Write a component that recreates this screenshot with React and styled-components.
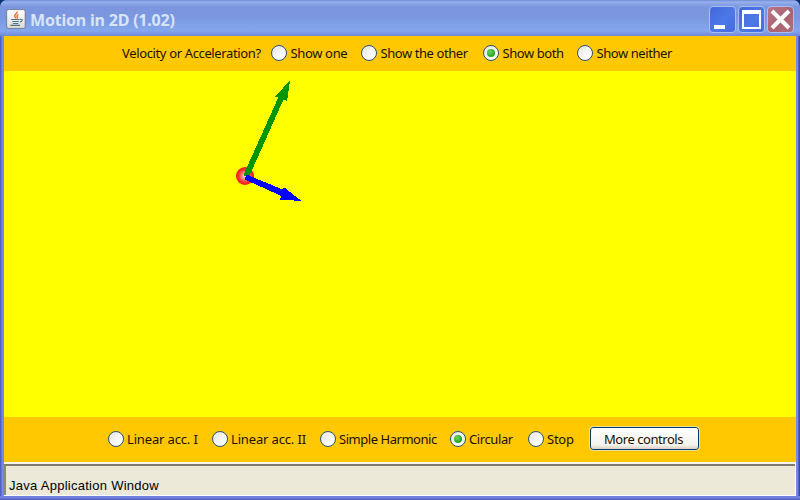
import React from 'react';
import styled, { createGlobalStyle } from 'styled-components';

const GlobalStyle = createGlobalStyle`
  * { box-sizing: border-box; }
  body { margin: 0; background: #08306e; overflow: hidden; }
`;

const Window = styled.main`
  width: 800px;
  height: 500px;
  display: flex;
  flex-direction: column;
  padding: 0 4px 4px;
  border-radius: 7px 7px 0 0;
  overflow: hidden;
  background:
    linear-gradient(to bottom, #6f80e0, #7180dc 50%, #4a50b4) 0 100% / 100% 4px no-repeat,
    linear-gradient(to right, #5260c4 0 1px, #6474da 1px 2px, #7688e2 2px 798px, #5562c8 798px 799px, #3e489e 799px);
`;

const TitleBar = styled.header`
  height: 36px;
  flex: none;
  margin: 0 -4px;
  padding: 6px 6px 0;
  display: flex;
  align-items: flex-start;
  background: linear-gradient(to bottom, #7388d8 0, #96b2ec 2px, #88a4e6 4px, #7c96de 7px, #7b97e0 17px, #80a1e8 26px, #83a6ec 31px, #7b93e0 34px, #7286d6 36px);
`;

const AppIcon = styled.svg`
  width: 20px;
  height: 23px;
  flex: none;
`;

const Title = styled.h1`
  margin: 0 0 0 4px;
  flex: 1;
  font: bold 16px/29px "Noto Sans", sans-serif;
  letter-spacing: -0.2px;
  color: #d8e4f8;
  white-space: nowrap;
`;

const Controls = styled.div`
  display: flex;
  gap: 2px;
`;

const WindowButton = styled.button`
  width: 27px;
  height: 27px;
  padding: 0;
  border: 1px solid #a9bdf3;
  border-radius: 4px;
  background: ${p => p.$close
    ? 'linear-gradient(135deg, #b87787, #ac6370 55%, #b0717e)'
    : 'linear-gradient(135deg, #4468d8, #4d78e8 55%, #456cdd)'};
  svg { display: block; width: 25px; height: 25px; }
`;

const OptionBar = styled.section`
  flex: none;
  height: ${p => p.$height}px;
  padding: 0 0 ${p => p.$lift}px ${p => p.$inset}px;
  display: flex;
  align-items: center;
  background: #ffc800;
`;

const Text = styled.span`
  font: 13px/18px "Noto Sans", sans-serif;
  letter-spacing: ${p => p.$spacing || 0}px;
  color: #1c1000;
  white-space: nowrap;
`;

const Prompt = styled(Text)`
  width: 149px;
`;

const Option = styled.label`
  width: ${p => p.$width}px;
  flex: none;
  display: flex;
  align-items: center;
  gap: ${p => p.$gap || 3}px;
`;

const RadioDot = styled.span`
  width: 16px;
  height: 16px;
  flex: none;
  display: grid;
  place-items: center;
  border: 1px solid #285078;
  border-radius: 50%;
  background: linear-gradient(135deg, #e3e3de, #ffffff 75%);
`;

const RadioMark = styled.span`
  width: 8px;
  height: 8px;
  border-radius: 50%;
  background: radial-gradient(circle at 38% 35%, #6cd466, #2fae2d 55%, #1c941c);
`;

const Stage = styled.svg`
  display: block;
  width: 792px;
  height: 346px;
  flex: none;
  background: #ffff00;
`;

const PushButton = styled.button`
  width: 109px;
  height: 23px;
  margin-left: 1px;
  padding: 0 2px 0 0;
  border: 1px solid #003c74;
  border-radius: 3px;
  outline: 1px solid #f3df92;
  background: linear-gradient(to bottom, #ffffff, #f4f3ee 80%, #d8d2c5);
`;

const StatusBar = styled.footer`
  flex: 1;
  border-top: 2px solid #f6f4e8;
  border-right: 1px solid #fff;
  border-bottom: 1px solid #fff;
  background: #ece9d8;
`;

const StatusText = styled.p`
  margin: 0;
  height: 31px;
  padding: 11px 0 0 3px;
  border: 0 solid #716f64;
  border-width: 2px 0 0 2px;
  border-top-color: #7c7a70;
  border-left-color: #8c897b;
  font: 13px/18px "Liberation Sans", Arial, sans-serif;
  letter-spacing: 0.27px;
  color: #000;
`;

const velocityOptions = [
  { label: 'Show one', width: 90, gap: 3.5, spacing: -0.35 },
  { label: 'Show the other', width: 122, gap: 3.5, spacing: -0.43 },
  { label: 'Show both', width: 94, gap: 3.5, spacing: -0.42, checked: true },
  { label: 'Show neither', width: 100, gap: 3.5, spacing: -0.43 },
];

const motionOptions = [
  { label: 'Linear acc. I', width: 104, spacing: -0.15 },
  { label: 'Linear acc. II', width: 108, spacing: -0.15 },
  { label: 'Simple Harmonic', width: 130, spacing: -0.46 },
  { label: 'Circular', width: 78, spacing: -0.4, checked: true },
  { label: 'Stop', width: 61, spacing: -0.25 },
];

const Options = ({ items }) => items.map(({ label, width, gap, checked, spacing }) => (
  <Option key={label} $width={width} $gap={gap}>
    <RadioDot>{checked && <RadioMark />}</RadioDot>
    <Text $spacing={spacing}>{label}</Text>
  </Option>
));

const JavaIcon = () => (
  <AppIcon viewBox="0 0 20 23">
    <defs>
      <linearGradient id="tile" x2="0" y2="1">
        <stop stopColor="#ffffff" /><stop offset="1" stopColor="#dcdcd8" />
      </linearGradient>
    </defs>
    <rect x=".6" y="3.6" width="18.6" height="18.8" rx="2" fill="url(#tile)" stroke="#666c80" strokeWidth=".8" />
    <path d="M11.2 5.5c.5 2.3-3.7 2.8-2.4 5 .4.7 1 1 1 1.9M12.4 8.7c-2.2.9-1.4 1.7-1 2.6.2.5 0 .9-.4 1.3" fill="none" stroke="#e96d2a" strokeWidth="1.4" />
    <path d="M5.2 13.5h8.4M6.4 15.5h6.4M6.8 17.5h5.5M4.4 19.4h9.7M14 13.4c3.3-.7 2.8 2.2-.2 2.7" fill="none" stroke="#527181" strokeWidth="1.1" />
  </AppIcon>
);

export default function App() {
  return (
    <>
      <GlobalStyle />
      <Window>
        <TitleBar>
          <JavaIcon />
          <Title>Motion in 2D (1.02)</Title>
          <Controls>
            <WindowButton aria-label="Minimize">
              <svg viewBox="0 0 25 25"><path d="M4 18h11v4H4z" fill="#fff" /></svg>
            </WindowButton>
            <WindowButton aria-label="Maximize">
              <svg viewBox="0 0 25 25"><path fillRule="evenodd" d="M3 3h19v19H3zM5 7v13h15V7z" fill="#fff" /></svg>
            </WindowButton>
            <WindowButton $close aria-label="Close">
              <svg viewBox="0 0 25 25"><path d="M4 4l17 17M21 4L4 21" fill="none" stroke="#fff" strokeWidth="4" /></svg>
            </WindowButton>
          </Controls>
        </TitleBar>
        <OptionBar $height={35} $lift={1} $inset={118}>
          <Prompt $spacing={-0.36}>Velocity or Acceleration?</Prompt>
          <Options items={velocityOptions} />
        </OptionBar>
        <Stage viewBox="4 71 792 346">
          <defs>
            <radialGradient id="ball">
              <stop stopColor="#ffdede" /><stop offset=".35" stopColor="#ff8888" /><stop offset=".75" stopColor="#ff2c2c" /><stop offset="1" stopColor="#ff1414" />
            </radialGradient>
          </defs>
          <circle cx="245" cy="176" r="9" fill="url(#ball)" />
          <g shapeRendering="crispEdges">
            <path d="M243.3 175.3L278.5 97L275 96.5L290 80.5L287 101L283.5 99.5L248.7 177.5z" fill="#009600" />
            <path d="M246.5 174.6L282 189.2L284 187.3L301.5 201L280 199.5L281 195.8L244.3 179.3z" fill="#0000ff" />
          </g>
        </Stage>
        <OptionBar $height={45} $lift={2} $inset={104}>
          <Options items={motionOptions} />
          <PushButton><Text $spacing={-0.45}>More controls</Text></PushButton>
        </OptionBar>
        <StatusBar>
          <StatusText>Java Application Window</StatusText>
        </StatusBar>
      </Window>
    </>
  );
}
